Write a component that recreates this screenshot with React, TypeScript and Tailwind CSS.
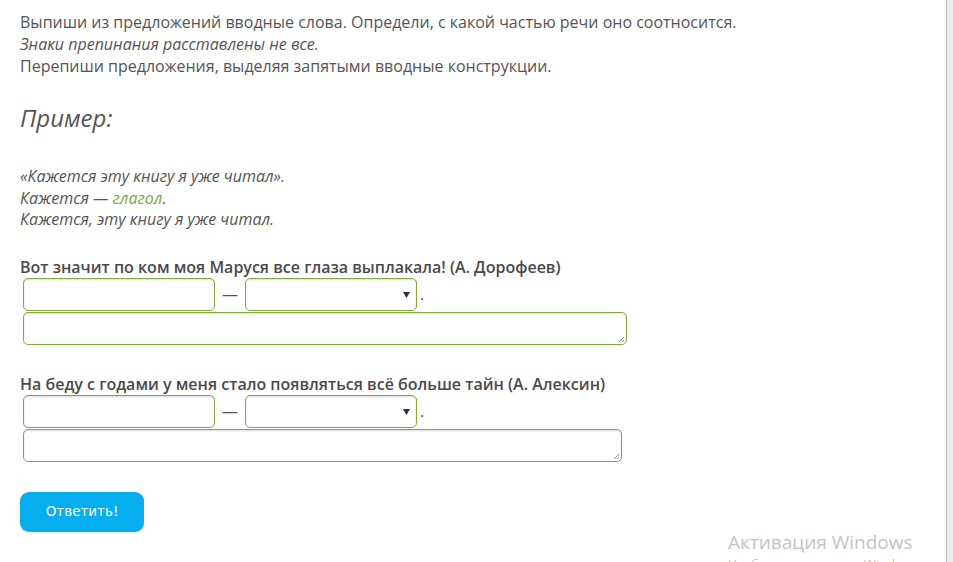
import React from "react";

const field =
  "h-[33px] rounded-[5px] border border-[#86a83c] bg-white shadow-[inset_0_1px_2px_rgba(0,0,0,0.15)]";

function Question({ text, taWidth }: { text: string; taWidth: string }) {
  return (
    <div className="flex flex-col">
      <div className="text-[16px] leading-[22px] font-semibold text-[#4a4a4a]">{text}</div>
      <div className="ml-[3px] flex items-center">
        <div className={`${field} w-[192px]`} />
        <span className="mx-[7px] text-[16px] text-[#555]">—</span>
        <div className={`${field} relative w-[172px]`}>
          <svg className="absolute right-[6px] top-[13px]" width="7" height="6" viewBox="0 0 7 6">
            <path d="M0 0 L7 0 L3.5 6 Z" fill="#333" />
          </svg>
        </div>
        <span className="ml-[3px] text-[16px] text-[#555]">.</span>
      </div>
      <div className={`${field} relative ml-[3px] mt-[1px] ${taWidth}`}>
        <svg className="absolute right-[1px] bottom-[1px]" width="7" height="7" viewBox="0 0 7 7">
          <path d="M1 6 L6 1 M4 6 L6 4" stroke="#888" strokeWidth="1" />
        </svg>
      </div>
    </div>
  );
}

export default function App() {
  return (
    <div
      className="relative flex h-[562px] w-[953px] overflow-hidden bg-white"
      style={{ fontFamily: '"Open Sans", "Noto Sans", sans-serif' }}
    >
      <div className="flex flex-1 flex-col pl-[20px] pt-[11px] text-[#555]">
        <div className="text-[16px] leading-[22px]">
          <div>Выпиши из предложений вводные слова. Определи, с какой частью речи оно соотносится.</div>
          <div className="italic">Знаки препинания расставлены не все.</div>
          <div>Перепиши предложения, выделяя запятыми вводные конструкции.</div>
        </div>
        <div className="mt-[25px] text-[24px] leading-[32px] italic text-[#555]">Пример:</div>
        <div className="mt-[32px] text-[16px] leading-[21.5px] italic">
          <div>«Кажется эту книгу я уже читал».</div>
          <div>
            Кажется — <span className="text-[#7ca53a]">глагол</span>.
          </div>
          <div>Кажется, эту книгу я уже читал.</div>
        </div>
        <div className="mt-[25px]">
          <Question
            text="Вот значит по ком моя Маруся все глаза выплакала! (А. Дорофеев)"
            taWidth="w-[604px]"
          />
        </div>
        <div className="mt-[28px]">
          <Question
            text="На беду с годами у меня стало появляться всё больше тайн (А. Алексин)"
            taWidth="w-[599px]"
          />
        </div>
        <div className="mt-[30px]">
          <button
            className="h-[40px] w-[124px] rounded-[9px] bg-[#06aef0] text-white"
            style={{ fontFamily: '"DejaVu Sans", Verdana, sans-serif', fontSize: "13.5px" }}
          >
            Ответить!
          </button>
        </div>
      </div>
      <div className="w-[7px] border-l border-[#bdbdbd] bg-[#ececec]" />
      <div className="pointer-events-none absolute left-[728px] top-[529px] text-[#c4c4c4]">
        <div className="text-[19px] leading-[26px]">Активация Windows</div>
        <div className="text-[13px] leading-[18px]">Чтобы активировать Windows, перейдите</div>
      </div>
    </div>
  );
}
